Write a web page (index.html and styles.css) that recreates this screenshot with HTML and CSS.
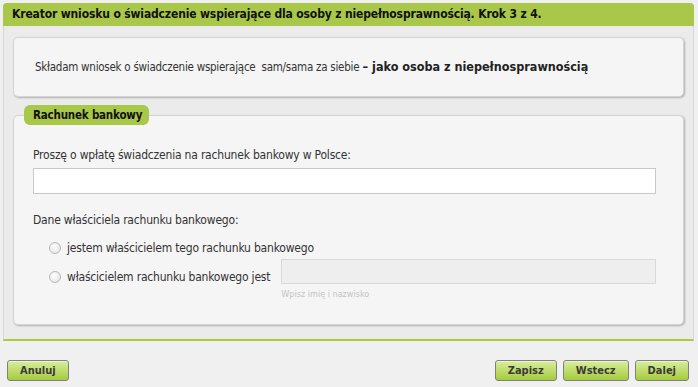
FILE: index.html
```html
<!DOCTYPE html>
<html lang="pl">
<head>
<meta charset="utf-8">
<link rel="stylesheet" href="styles.css">
</head>
<body>
<div class="page">
  <div class="panel">
    <div class="panel-header">Kreator wniosku o świadczenie wspierające dla osoby z niepełnosprawnością. Krok 3 z 4.</div>
    <div class="panel-body">
      <div class="box intro">
        <span class="intro-text">Składam wniosek o świadczenie wspierające&nbsp; sam/sama za siebie</span> <strong>– jako osoba z niepełnosprawnością</strong>
      </div>
      <div class="box section">
        <div class="legend">Rachunek bankowy</div>
        <div class="label">Proszę o wpłatę świadczenia na rachunek bankowy w Polsce:</div>
        <div class="input"></div>
        <div class="label owner">Dane właściciela rachunku bankowego:</div>
        <div class="radios">
          <div class="radio-row"><span class="radio"></span><span>jestem właścicielem tego rachunku bankowego</span></div>
          <div class="radio-row">
            <span class="radio"></span><span class="radio-text">właścicielem rachunku bankowego jest</span>
            <div class="name-field">
              <div class="input disabled"></div>
              <div class="hint">Wpisz imię i nazwisko</div>
            </div>
          </div>
        </div>
      </div>
    </div>
  </div>
  <div class="actions">
    <button class="btn">Anuluj</button>
    <div class="right">
      <button class="btn">Zapisz</button>
      <button class="btn">Wstecz</button>
      <button class="btn">Dalej</button>
    </div>
  </div>
</div>
</body>
</html>
```

FILE: styles.css
```css
html, body {
  margin: 0;
  background: #f0f0f0;
}
body {
  font-family: "DejaVu Sans Condensed", "DejaVu Sans", sans-serif;
  font-size: 12px;
  letter-spacing: -0.2px;
  color: #333;
}
.page {
  padding: 3px 4px 0 3px;
}
.panel {
  background: #ebebeb;
  border: 1px solid #d6d6d6;
  border-top: none;
  border-bottom: 2px solid #a9cb3f;
  border-radius: 4px 4px 0 0;
}
.panel-header {
  background: #a9c84a;
  height: 23px;
  line-height: 23px;
  padding-left: 9px;
  font-weight: bold;
  font-size: 12px;
  letter-spacing: -0.15px;
  color: #111;
  border-radius: 4px 4px 0 0;
  margin: 0 -1px;
}
.panel-body {
  padding: 11px 9px 14px 9px;
}
.box {
  background: #f5f5f5;
  border: 1px solid #d4d4d4;
  border-radius: 5px;
  box-shadow: 1px 1px 2px rgba(0,0,0,0.25);
}
.intro {
  height: 58px;
  line-height: 58px;
  padding-left: 21px;
}
.intro-text {
  font-size: 11.5px;
  letter-spacing: -0.25px;
}
.intro strong {
  color: #222;
  font-size: 12.5px;
  letter-spacing: 0;
}
.section {
  margin-top: 18px;
  position: relative;
  padding: 31px 27px 24px 19px;
}
.legend {
  position: absolute;
  left: 10px;
  top: -11px;
  background: #a9c84a;
  border-radius: 6px;
  height: 20px;
  line-height: 20px;
  padding: 0 7px 0 9px;
  font-weight: bold;
  font-size: 11.5px;
  letter-spacing: -0.2px;
  color: #111;
}
.label {
  line-height: 16px;
}
.input {
  margin-top: 5px;
  height: 24px;
  background: #fff;
  border: 1px solid #c8c8c8;
}
.owner {
  margin-top: 18px;
}
.radios {
  margin-top: 11px;
  padding-left: 16px;
}
.radio-row {
  display: flex;
  align-items: flex-start;
  line-height: 18px;
}
.radio-row + .radio-row {
  margin-top: 11px;
}
.radio {
  width: 10px;
  height: 10px;
  border: 1px solid #b8b8b8;
  border-radius: 50%;
  background: radial-gradient(circle at 40% 40%, #fff 0%, #e8e8e8 70%, #d8d8d8 100%);
  margin: 3px 6px 0 0;
  flex: none;
}
.radio-text {
  margin-right: 11px;
}
.name-field {
  flex: 1;
  margin-top: -9px;
}
.name-field .input.disabled {
  margin-top: 0;
  background: #eee;
  border-color: #d8d8d8;
  height: 23px;
}
.hint {
  font-size: 9px;
  letter-spacing: 0;
  color: #c4c4c4;
  margin-top: 4px;
  line-height: 12px;
}
.actions {
  display: flex;
  justify-content: space-between;
  margin-top: 19px;
  padding: 0 5px 0 4px;
}
.right {
  display: flex;
  gap: 6px;
}
.btn {
  font-family: "DejaVu Sans Condensed", "DejaVu Sans", sans-serif;
  font-weight: bold;
  font-size: 11px;
  color: #3a3a3a;
  height: 21px;
  padding: 0 12px;
  border: 1px solid #808080;
  border-radius: 3px;
  background: linear-gradient(#d9ed9e, #a5cb3c);
  box-shadow: inset 0 1px 0 rgba(255,255,255,0.5);
  line-height: 19px;
}
```
